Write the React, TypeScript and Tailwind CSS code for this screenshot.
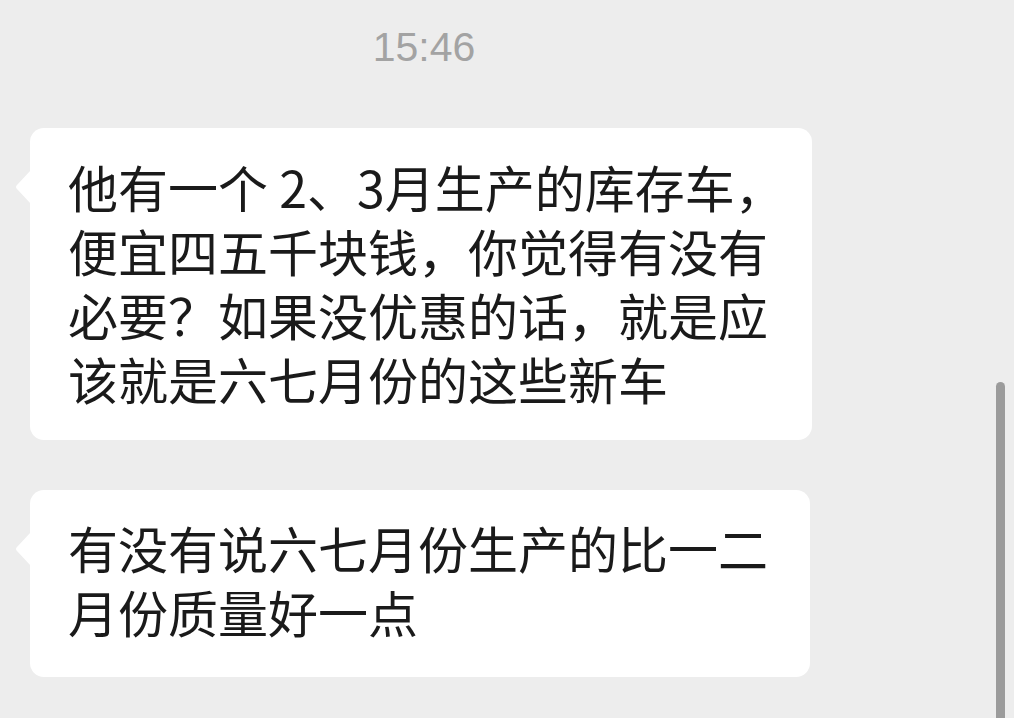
import type { ReactNode } from "react";

const cjk = "font-['Noto_Sans_CJK_SC',_'Noto_Sans',_sans-serif]";

type BubbleProps = {
  lines: ReactNode[];
  className: string;
};

function Tail() {
  return (
    <svg
      className="absolute left-[-15px] top-[42px]"
      width="16"
      height="34"
      viewBox="0 0 16 34"
    >
      <path d="M16 0 L2 15 Q0 17 2 19 L16 34 Z" fill="#ffffff" />
    </svg>
  );
}

function Bubble({ lines, className }: BubbleProps) {
  return (
    <div
      className={`relative ml-[30px] rounded-[14px] bg-white pl-[38px] text-[50px] font-normal leading-[64px] text-[#1a1a1a] ${cjk} ${className}`}
    >
      <Tail />
      {lines.map((line, i) => (
        <div key={i} className="whitespace-nowrap">
          {line}
        </div>
      ))}
    </div>
  );
}

export default function App() {
  return (
    <div className="relative h-[718px] w-[1014px] overflow-hidden bg-[#ededed]">
      <div className="flex h-[128px] w-[848px] justify-center pt-[24px]">
        <span className="font-['Liberation_Sans',_sans-serif] text-[41px] leading-[46px] text-[#a3a3a3]">
          15:46
        </span>
      </div>

      <Bubble
        className="w-[782px] pt-[26px] pb-[30px]"
        lines={[
          "他有一个 2、3月生产的库存车，",
          "便宜四五千块钱，你觉得有没有",
          "必要？如果没优惠的话，就是应",
          "该就是六七月份的这些新车",
        ]}
      />

      <Bubble
        className="mt-[50px] w-[780px] pt-[25px] pb-[34px]"
        lines={["有没有说六七月份生产的比一二", "月份质量好一点"]}
      />

      {/* scroll indicator */}
      <div className="absolute right-[9px] top-[382px] h-[340px] w-[9px] rounded-t-full bg-[#9b9b9b]" />
    </div>
  );
}
